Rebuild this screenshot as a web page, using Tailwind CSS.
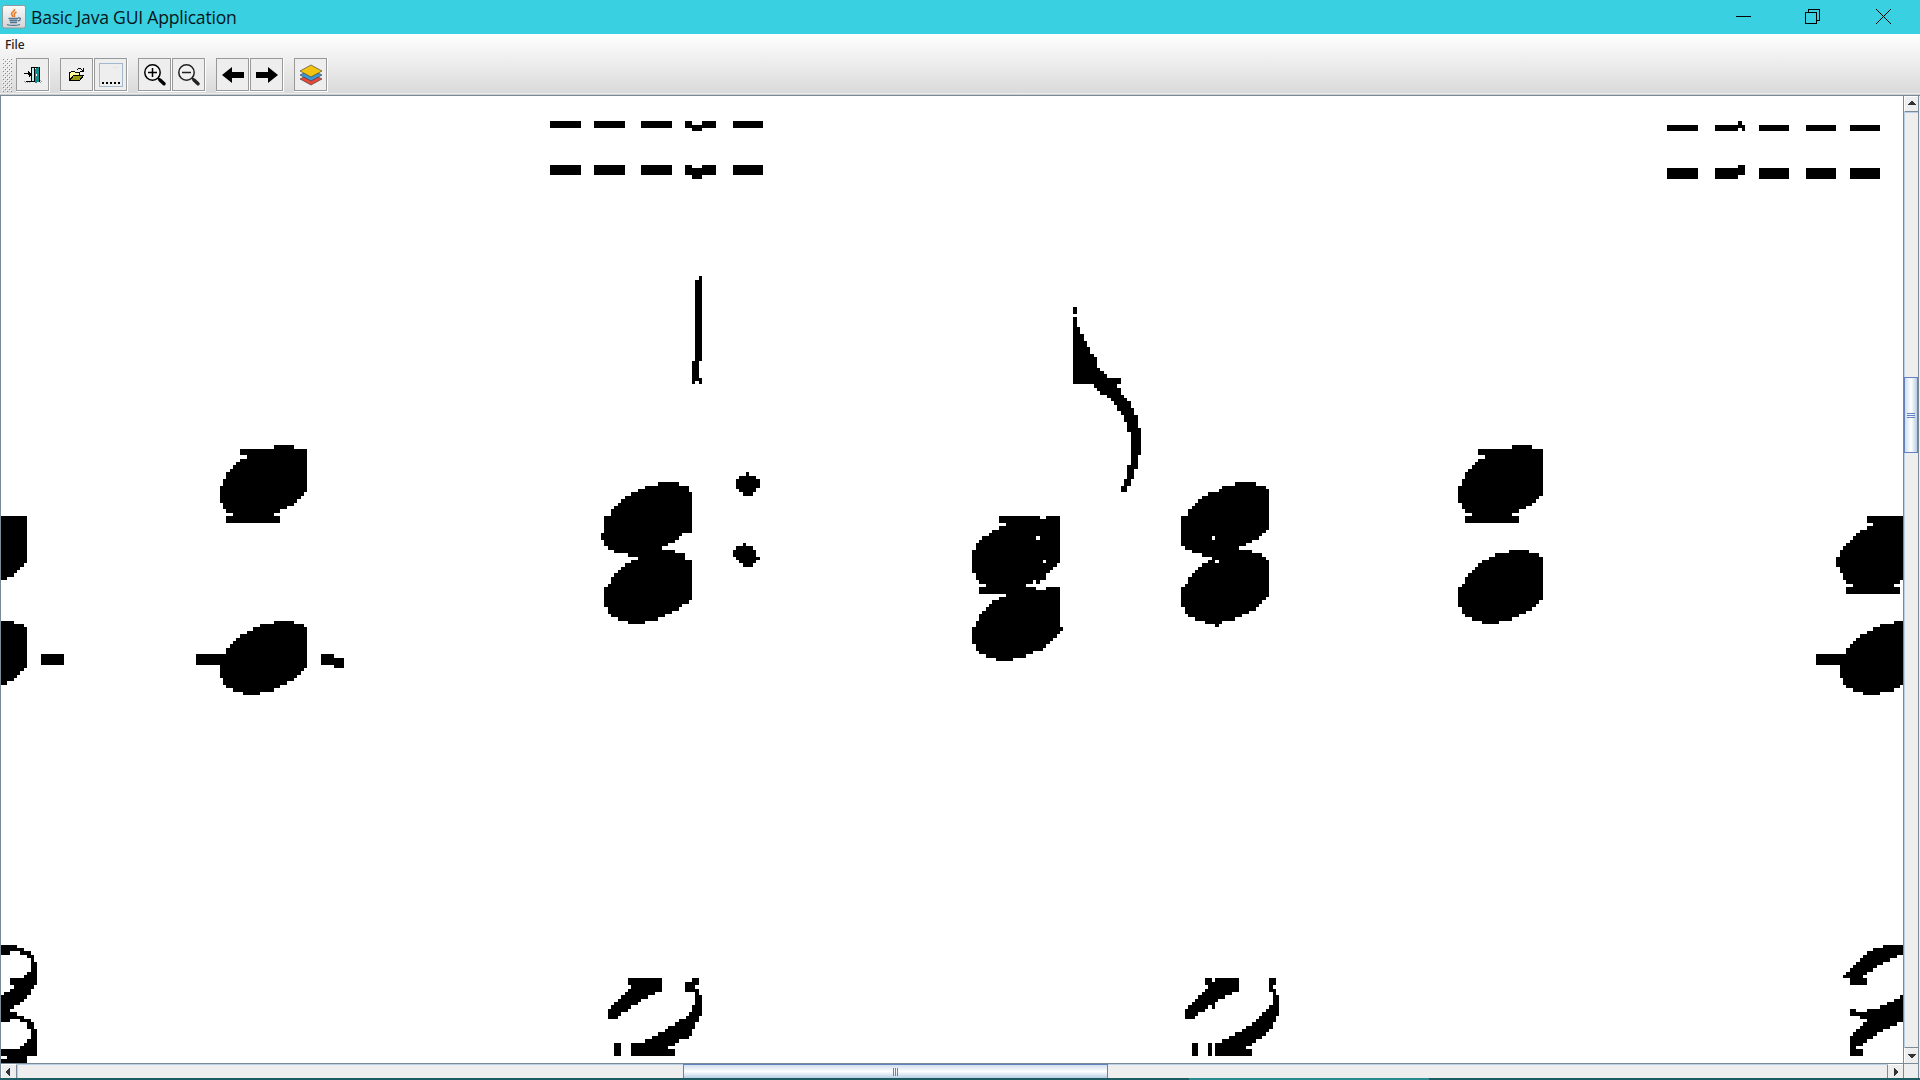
<!DOCTYPE html>
<html lang="en">
<head>
<meta charset="utf-8">
<title>Basic Java GUI Application</title>
<script src="https://cdn.jsdelivr.net/npm/@tailwindcss/browser@4"></script>
</head>
<body class="w-[1920px] h-[1080px] overflow-hidden flex flex-col bg-[#eeeeee] font-['Open_Sans',sans-serif]">
<header class="h-[34px] shrink-0 bg-[#39d0e1] flex items-center justify-between">
  <div class="flex items-center h-full pl-[2px]">
    <svg class="w-6 h-6 shrink-0" viewBox="0 0 24 24">
      <defs><linearGradient id="jb" x1="0" y1="0" x2="0" y2="1"><stop offset="0" stop-color="#fafafa"/><stop offset="1" stop-color="#d2d4d6"/></linearGradient></defs>
      <rect x=".5" y=".5" width="23" height="22.5" rx="2" fill="url(#jb)" stroke="#8c9a9c"/>
      <path d="M12.500 4c1 2-3 3-3 4.800 0 1.200 1.500 1.700 1.500 3.200M14.500 7c-2 1-2.500 1.700-2.300 2.600.3 1 .8 1.300 0 2.400" fill="none" stroke="#ea7d2c" stroke-width="1.600"/>
      <path d="M6.500 13.500h9.500M7.500 15.500h8M8 17.500h7M16 13c3.500-.8 3 2.500 0 3M5 19.500c3 1.300 10 1.300 13 0" fill="none" stroke="#4f7592" stroke-width="1.300"/>
    </svg>
    <span class="ml-[5px] text-[17.600px] leading-[35px] text-[#06161a] whitespace-nowrap tracking-[-0.230px]">Basic Java GUI Application</span>
  </div>
  <svg class="w-[184px] h-[34px]" viewBox="1736 0 184 34" fill="none" stroke="#000" shape-rendering="crispEdges">
    <path d="M1736 16.500H1751"/>
    <path d="M1805.500 12.500H1816.500V23.500H1805.500ZM1808.500 12.500V9.500H1819.500V20.500H1816.500"/>
    <path d="M1876 9L1891 24M1891 9L1876 24" shape-rendering="auto"/>
  </svg>
</header>
<div class="h-[59px] shrink-0 flex flex-col bg-linear-to-b from-white to-[#dadada]">
  <nav class="h-[21px] pl-[5px] text-[12px] leading-[21px] text-[#222222] font-['Noto_Sans',sans-serif] font-medium"><span>File</span></nav>
  <div class="flex h-[38px] pl-[2px] pt-[3px]">
    <svg class="w-[10px] h-[34px] mr-1" viewBox="0 0 10 34" shape-rendering="crispEdges"><defs><pattern id="grip" width="4" height="4" patternUnits="userSpaceOnUse"><path d="M1 1h1v1H1zM3 3h1v1H3z" fill="#7a8a99"/><path d="M0 0h1v1H0zM2 2h1v1H2z" fill="#fff"/></pattern></defs><rect width="10" height="34" fill="url(#grip)"/></svg>
    <div class="flex gap-[10px]">
      <button class="w-[34px] h-[34px] border-r border-b border-white"><svg class="w-[33px] h-[33px] bg-[#eeeeee] border border-[#999999]" viewBox="17 59 31 31" shape-rendering="crispEdges">
        <path d="M24 81h1v1h-1zM26 81h1v1h-1zM28 81h1v1h-1zM25 82h1v1h-1zM27 82h1v1h-1zM29 82h1v1h-1zM40 80h1v1h-1zM41 81h1v1h-1zM40 82h1v1h-1z" fill="#a0a0a0"/>
        <path d="M31.500 67.500h8v14h-8z" fill="#fff" stroke="#000"/><path d="M32 68h3v13h-3z" fill="#c4eef0"/><path d="M35 69l4-2v15l-4 1z" fill="#118a8a"/><path d="M34 68h1v14h-1zM26 81h5v1h-5z"/><path d="M36 74h1v2h-1z" fill="#fff"/>
        <path d="M24 73h4v-2h1v1h1v1h1v1h1v1h-1v1h-1v1h-1v-2h-1v-1h-4z"/>
      </svg></button>
      <div class="flex">
        <button class="w-[34px] h-[34px] border-r border-b border-white"><svg class="w-[33px] h-[33px] bg-[#eeeeee] border border-[#999999]" viewBox="61 59 31 31" shape-rendering="crispEdges">
          <path d="M69.500 80.500v-8h1l1-1h3l1 1h4v3" fill="#ffff9c" stroke="#000"/><path d="M69.500 80.500l4-5h10l-4 5z" fill="#9a9a10" stroke="#000"/><path d="M77 69h1v-1h3v1h1v1h1v-2h1v4h-4v-1h2v-1h-1v-1h-3v1h-1z"/>
        </svg></button>
        <button class="w-[34px] h-[34px] border-r border-b border-white"><svg class="w-[33px] h-[33px] bg-[#eeeeee] border border-[#999999]" viewBox="95 59 31 31" shape-rendering="crispEdges">
          <rect x="99.500" y="63.500" width="23" height="23" fill="#eee" stroke="#a3b8cc"/><path d="M102 82h2v2h-2zM106 82h2v2h-2zM110 82h2v2h-2zM114 82h2v2h-2zM118 82h2v2h-2z"/><path d="M113 67h2v1h-2zM116 67h2v1h-2z" fill="#ddd"/>
        </svg></button>
      </div>
      <div class="flex">
        <button class="w-[34px] h-[34px] border-r border-b border-white"><svg class="w-[33px] h-[33px] bg-[#eeeeee] border border-[#999999]" viewBox="139 59 31 31">
          <circle cx="152.500" cy="72.500" r="7.700" fill="#f5f5f5" stroke="#000" stroke-width="1.500"/><path d="M148 72.500h9M152.500 68v9" stroke="#000" stroke-width="1.500"/><path d="M158 78l2 2" stroke="#000" stroke-width="2"/><path d="M160 80l4 3.700" stroke="#000" stroke-width="3.500" stroke-linecap="round"/>
        </svg></button>
        <button class="w-[34px] h-[34px] border-r border-b border-white"><svg class="w-[33px] h-[33px] bg-[#eeeeee] border border-[#999999]" viewBox="173 59 31 31">
          <circle cx="186.500" cy="72.500" r="7.700" fill="#f0f0f0" stroke="#222" stroke-width="1.500"/><path d="M182 72.500h9" stroke="#222" stroke-width="1.500"/><path d="M192 78l2 2" stroke="#222" stroke-width="2"/><path d="M194 80l4 3.700" stroke="#222" stroke-width="3.500" stroke-linecap="round"/>
        </svg></button>
      </div>
      <div class="flex">
        <button class="w-[34px] h-[34px] border-r border-b border-white"><svg class="w-[33px] h-[33px] bg-[#eeeeee] border border-[#999999]" viewBox="217 59 31 31"><path d="M222 75l10-8v5h12v6h-12v5z"/></svg></button>
        <button class="w-[34px] h-[34px] border-r border-b border-white"><svg class="w-[33px] h-[33px] bg-[#eeeeee] border border-[#999999]" viewBox="251 59 31 31"><path d="M278 75l-10-8v5h-12v6h12v5z"/></svg></button>
      </div>
      <button class="w-[34px] h-[34px] border-r border-b border-white"><svg class="w-[33px] h-[33px] bg-[#eeeeee] border border-[#999999]" viewBox="295 59 31 31">
        <g stroke="#333" stroke-width=".6"><path d="M300 79l11-5.500 11 5.500-11 6z" fill="#e8483a"/><path d="M300 75l11-5.500 11 5.500-11 6z" fill="#3d97d8"/><path d="M300 71l11-6 11 6-11 6z" fill="#f2c40f"/></g>
      </svg></button>
    </div>
  </div>
</div>
<div class="h-[2px] shrink-0 bg-[#eeeeee] border-b border-[#cccccc]"></div>
<main class="h-[983px] shrink-0 grid grid-cols-[1903px_15px_2px] grid-rows-[968px_15px] bg-[#eeeeee]">
  <svg class="w-[1903px] h-[968px] bg-white border-l border-t border-[#7a8a99]" viewBox="1 96 1902 967" shape-rendering="crispEdges" fill-rule="evenodd">
    <g transform="translate(540 110) scale(.3333333)">
      <path d="M30 33H123V54H30ZM162 33H255V54H162ZM303 33H396V54H303ZM435 33H456V45H486V33H528V54H486V63H456V54H435ZM579 33H669V54H579Z"/>
      <path d="M30 165H123V195H30ZM162 165H255V195H162ZM303 165H396V195H303ZM435 165H456V174H486V165H528V195H486V207H456V195H435ZM579 165H669V195H579Z"/>
      <path d="M477 498H486V753H477V804H486V822H477V813H465V822H456V753H465V510H477Z"/>
    </g>
    <g transform="translate(1700 0) scale(.3333333)">
      <path d="M-99 375H-6V393H-99ZM45 375H114V363H126V375H135V393H126V384H114V393H45ZM177 375H267V393H177ZM318 375H408V393H318ZM450 375H540V393H450Z"/>
      <path d="M-99 504H-6V537H-99ZM45 504H114V495H135V525H114V537H45ZM177 504H267V537H177ZM318 504H408V537H318ZM450 504H540V537H450Z"/>
    </g>
    <g transform="translate(0 430) scale(.3333333)">
      <path d="M3 258H81V399H72V411H60V420H51V429H42V441H21V450H3Z"/>
      <path d="M3 573H42V582H72V591H81V714H72V723H60V735H51V744H42V753H21V765H3ZM123 672H192V705H123Z"/>
      <path d="M720 57H822V45H882V57H921V186H912V198H903V207H891V219H882V228H861V237H840V249H822V258H840V279H678V258H699V249H678V237H669V219H660V168H669V147H678V126H690V117H699V105H708V96H720V87H741V75H720Z"/>
      <path d="M822 573H882V582H912V591H921V714H912V723H903V735H891V744H882V753H861V765H840V774H822V786H780V795H729V786H699V774H678V765H669V744H660V705H588V672H678V654H690V642H699V633H708V624H720V612H741V603H759V591H780V582H822ZM963 672H1002V684H1032V714H1002V705H963Z"/>
    </g>
    <g transform="translate(590 470) scale(.3333333)">
      <path d="M204 36H267V48H297V66H306V189H276V198H267V210H255V219H234V228H216V240H255V249H285V270H306V390H297V402H276V411H267V423H246V432H225V441H204V453H165V462H114V453H84V441H63V432H54V411H42V351H54V342H63V321H72V309H84V300H93V291H105V279H123V270H144V261H114V249H72V240H54V228H42V210H33V189H42V138H63V117H72V108H84V99H93V87H105V78H123V66H144V57H165V48H204Z"/>
      <path d="M468 6H477V18H498V27H510V54H498V66H489V78H459V66H447V57H438V27H447V18H468ZM459 219H468V228H489V240H498V261H510V270H498V279H489V291H459V279H447V270H438V261H429V240H438V228H459Z"/>
    </g>
    <g transform="translate(960 300) scale(.3333333)">
      <path d="M339 21H351V42H339ZM339 51H351V81H360V102H372V123H381V141H390V162H402V171H411V204H420V213H432V222H441V234H483V252H471V264H483V285H492V294H501V303H513V324H522V345H534V384H543V465H534V507H522V537H513V558H501V576H483V558H492V537H501V495H513V396H501V366H492V345H483V333H471V315H462V303H453V294H441V285H420V273H411V264H402V252H339Z"/>
      <path d="M117 648H240V657H258V648H300V789H291V801H279V810H270V819H258V840H240V852H228V840H219V852H198V861H228V870H258V861H300V981H309V993H300V1002H291V1014H279V1023H270V1032H258V1044H249V1053H219V1062H198V1074H159V1083H108V1074H78V1062H57V1053H48V1032H36V981H48V963H57V942H66V933H78V921H87V912H96V900H117V891H138V882H57V861H78V852H57V840H48V819H36V750H48V729H57V720H66V708H87V699H96V690H117V678H138V669H117ZM228 708H240V720H228ZM249 780H258V789H249Z"/>
      <path d="M825 546H888V558H918V567H927V690H918V699H906V708H897V720H876V729H858V738H837V750H876V759H906V771H918V780H927V891H918V900H906V912H897V921H888V933H867V942H846V951H825V963H786V972H777V981H765V972H735V963H705V951H684V942H675V921H663V861H675V852H684V831H696V819H705V810H714V801H726V789H744V780H756V771H726V759H696V750H675V738H663V648H684V627H696V618H705V609H714V597H726V588H744V576H777V567H786V558H825ZM756 708H765V720H756ZM765 780H777V789H765Z"/>
    </g>
    <g transform="translate(1440 430) scale(.3333333)">
      <path d="M114 57H216V45H276V57H309V198H297V207H288V219H276V228H258V237H237V249H216V258H237V279H75V258H96V249H75V237H66V219H54V168H66V147H75V126H84V117H96V105H105V96H114V87H135V75H114Z"/>
      <path d="M207 360H267V369H297V381H309V510H297V522H288V531H276V543H258V552H237V561H216V573H177V582H126V573H96V561H75V552H66V531H54V471H66V462H75V441H84V429H96V420H105V411H114V399H126V390H147V381H165V369H207Z"/>
    </g>
    <g transform="translate(1800 500) scale(.3333333)">
      <path d="M201 48H309V240H300V252H282V261H300V282H138V261H159V252H138V240H129V219H120V201H108V171H120V150H129V138H138V129H150V120H159V108H168V99H180V90H201V78H219V69H201Z"/>
      <path d="M282 363H309V555H300V564H282V576H240V585H189V576H159V564H138V555H129V534H120V495H48V462H138V444H150V432H159V423H168V414H180V402H201V393H219V381H240V372H282Z"/>
    </g>
    <g transform="translate(0 930) scale(.3333333)">
      <path d="M3 45H51V54H72V63H93V75H102V96H111V165H102V177H93V195H81V207H72V216H60V225H42V237H30V246H51V258H72V267H93V276H102V297H111V378H81V399H3V387H21V378H3V357H60V348H72V339H81V327H93V297H81V276H60V267H30V276H3V195H12V186H30V177H42V165H30V144H72V135H81V126H93V84H81V75H60V63H30V75H3Z"/>
    </g>
    <g transform="translate(590 960) scale(.3333333)">
      <path d="M114 54H216V96H195V105H174V117H153V126H144V135H123V147H114V156H93V168H84V177H54V147H63V135H72V126H84V117H93V105H105V96H114V87H123V75H114Z"/>
      <path d="M306 54H327V75H315V87H327V105H336V168H327V186H315V207H306V228H297V237H267V249H255V258H234V267H255V288H123V249H165V237H186V228H204V216H225V207H234V198H255V186H267V177H288V168H297V156H306V135H315V96H285V66H306ZM72 249H93V288H72Z"/>
    </g>
    <g transform="translate(1170 960) scale(.3333333)">
      <path d="M105 54H126V66H135V54H207V96H186V105H165V117H144V126H135V147H126V135H114V147H105V156H84V168H75V177H45V147H54V135H66V126H75V117H84V105H96V96H105V87H114V75H105Z"/>
      <path d="M297 54H318V75H309V87H318V105H327V168H318V186H309V207H297V216H288V228H276V237H258V249H246V258H228V267H246V288H135V249H156V237H177V228H195V216H216V207H228V198H246V186H258V177H267V168H276V156H288V147H297V135H309V96H297ZM66 249H84V288H66ZM114 249H126V288H114Z"/>
    </g>
    <g transform="translate(1800 930) scale(.3333333)">
      <path d="M249 45H309V75H291V84H270V96H249V105H231V114H219V126H201V135H189V144H201V165H150V144H129V135H138V126H150V114H159V105H168V96H180V84H189V75H201V63H219V54H249Z"/>
      <path d="M300 195H309V276H291V288H270V297H249V306H231V318H219V327H201V339H189V348H168V357H189V378H150V318H159V306H168V297H180V288H189V276H201V267H180V258H150V237H168V246H201V237H240V225H261V216H282V207H300Z"/>
    </g>
  </svg>
  <div class="border-l border-t border-[#7a8a99] flex flex-col">
    <div class="h-[16px] shrink-0 border-b border-[#7a8a99] border-l border-l-white border-t border-t-white flex items-start justify-center pt-1"><svg class="w-2 h-1" viewBox="0 0 8 4" shape-rendering="crispEdges"><path d="M3 0h2v1h1v1h1v1h1v1H0V3h1V2h1V1h1z" fill="#333"/></svg></div>
    <div class="h-[265px] shrink-0 border-l border-t border-[#b8cfe5]"></div>
    <div class="h-[76px] shrink-0 border border-[#6382bf] bg-linear-to-r from-[#cfdeed] via-white to-[#b8cfe5] flex flex-col gap-px items-center justify-center"><i class="w-2 h-px bg-[#6382bf]"></i><i class="w-2 h-px bg-[#6382bf]"></i><i class="w-2 h-px bg-[#6382bf]"></i></div>
    <div class="grow border-l border-[#b8cfe5]"></div>
    <div class="h-[16px] shrink-0 border-t border-[#7a8a99] border-l border-l-white flex items-center justify-center"><svg class="w-2 h-1" viewBox="0 0 8 4" shape-rendering="crispEdges"><path d="M0 0h8v1H7v1H6v1H5v1H3V3H2V2H1V1H0z" fill="#333"/></svg></div>
  </div>
  <div class="border-l border-t border-[#7a8a99]"></div>
  <div class="border-l border-t border-[#7a8a99] flex">
    <div class="w-[16px] shrink-0 border-r border-[#7a8a99] border-l border-l-white border-t border-t-white flex items-center justify-start pl-1"><svg class="w-1 h-2" viewBox="0 0 4 8" shape-rendering="crispEdges"><path d="M3 0h1v8H3V7H2V6H1V5H0V3h1V2h1V1h1z" fill="#333"/></svg></div>
    <div class="w-[666px] shrink-0 border-l border-t border-[#b8cfe5]"></div>
    <div class="w-[425px] shrink-0 border border-b-0 border-[#6382bf] bg-linear-to-b from-[#cfdeed] via-white to-[#b8cfe5] flex gap-px items-center justify-center"><i class="h-2 w-px bg-[#6382bf]"></i><i class="h-2 w-px bg-[#6382bf]"></i><i class="h-2 w-px bg-[#6382bf]"></i></div>
    <div class="grow border-t border-[#b8cfe5]"></div>
    <div class="w-[16px] shrink-0 border-l border-[#7a8a99] border-t border-t-white flex items-center justify-center"><svg class="w-1 h-2" viewBox="0 0 4 8" shape-rendering="crispEdges"><path d="M0 0h1v1h1v1h1v1h1v2H3v1H2v1H1v1H0z" fill="#333"/></svg></div>
  </div>
  <div class="border-l border-t border-[#7a8a99]"></div>
  <div class="border-l border-[#7a8a99]"></div>
</main>
<footer class="h-[2px] shrink-0 flex bg-[#1c5c62]"><div class="ml-[1189px] w-[240px] bg-[#298a8f]"></div></footer>
</body>
</html>
